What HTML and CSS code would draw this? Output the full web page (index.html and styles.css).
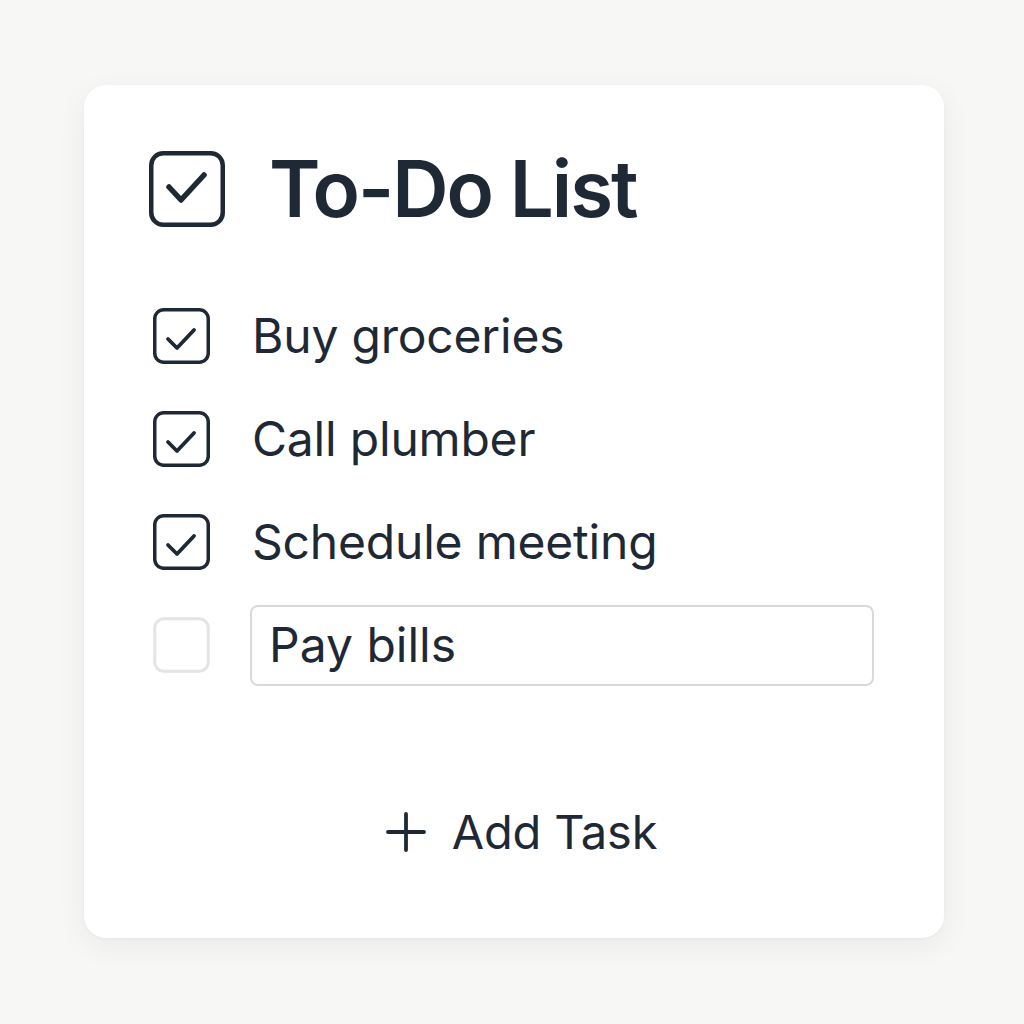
FILE: index.html
```html
<!DOCTYPE html>
<html>
<head>
<meta charset="utf-8">
<link rel="stylesheet" href="styles.css">
</head>
<body>
<div class="card">
  <div class="header">
    <svg class="header-icon" viewBox="0 0 76 76" width="76" height="76">
      <rect x="2.25" y="2.25" width="71.5" height="71.5" rx="12" fill="none" stroke="#1f2935" stroke-width="4.5"/>
      <path d="M20 36 L32 49 L55 24" fill="none" stroke="#1f2935" stroke-width="5.5" stroke-linecap="round" stroke-linejoin="round"/>
    </svg>
    <h1 class="title">To-Do List</h1>
  </div>
  <ul class="tasks">
    <li class="task">
      <svg class="box" viewBox="0 0 57 56" width="57" height="56">
        <rect x="1.75" y="1.75" width="53.5" height="52.5" rx="9" fill="none" stroke="#1f2935" stroke-width="3.5"/>
        <path d="M15 31 L24 40 L41 22" fill="none" stroke="#1f2935" stroke-width="3.8" stroke-linecap="round" stroke-linejoin="round"/>
      </svg>
      <span class="label">Buy groceries</span>
    </li>
    <li class="task">
      <svg class="box" viewBox="0 0 57 56" width="57" height="56">
        <rect x="1.75" y="1.75" width="53.5" height="52.5" rx="9" fill="none" stroke="#1f2935" stroke-width="3.5"/>
        <path d="M15 31 L24 40 L41 22" fill="none" stroke="#1f2935" stroke-width="3.8" stroke-linecap="round" stroke-linejoin="round"/>
      </svg>
      <span class="label">Call plumber</span>
    </li>
    <li class="task">
      <svg class="box" viewBox="0 0 57 56" width="57" height="56">
        <rect x="1.75" y="1.75" width="53.5" height="52.5" rx="9" fill="none" stroke="#1f2935" stroke-width="3.5"/>
        <path d="M15 31 L24 40 L41 22" fill="none" stroke="#1f2935" stroke-width="3.8" stroke-linecap="round" stroke-linejoin="round"/>
      </svg>
      <span class="label">Schedule meeting</span>
    </li>
    <li class="task">
      <svg class="box" viewBox="0 0 57 56" width="57" height="56">
        <rect x="1.75" y="1.75" width="53.5" height="52.5" rx="9" fill="none" stroke="#e4e4e4" stroke-width="3"/>
      </svg>
      <div class="input">Pay bills</div>
    </li>
  </ul>
  <div class="add">
    <svg class="plus" viewBox="0 0 40 40" width="40" height="40">
      <path d="M20 2 V38 M2 20 H38" fill="none" stroke="#1f2935" stroke-width="3.8" stroke-linecap="round"/>
    </svg>
    <span class="add-label">Add Task</span>
  </div>
</div>
</body>
</html>
```
FILE: styles.css
```css
* { box-sizing: border-box; }
html, body { margin: 0; padding: 0; }
body {
  width: 1024px;
  height: 1024px;
  background: #f7f7f6;
  font-family: Inter, "Noto Sans", sans-serif;
  color: #1f2935;
  padding: 85px 80px 0 84px;
}
.card {
  width: 860px;
  height: 853px;
  background: #ffffff;
  border-radius: 22px;
  box-shadow: 0 8px 30px rgba(0,0,0,0.06), 0 1px 3px rgba(0,0,0,0.03);
  padding: 66px 70px 0 65px;
  display: flex;
  flex-direction: column;
}
.header {
  display: flex;
  align-items: center;
  gap: 44px;
  height: 76px;
}
.header-icon { flex: none; }
.title {
  margin: 0;
  font-size: 78px;
  font-weight: 600;
  letter-spacing: -2px;
  line-height: 1;
}
.tasks {
  list-style: none;
  margin: 81px 0 0 0;
  padding: 0;
  display: flex;
  flex-direction: column;
  gap: 47px;
}
.task {
  display: flex;
  align-items: center;
  gap: 42px;
  height: 56px;
  padding-left: 4px;
}
.box { flex: none; }
.label {
  font-size: 48px;
  font-weight: 400;
  line-height: 1;
  letter-spacing: -0.2px;
}
.input {
  margin-left: -2px;
  width: 624px;
  height: 81px;
  border: 2px solid #d9d9d9;
  border-radius: 8px;
  font-size: 48px;
  line-height: 1;
  padding-left: 17px;
  display: flex;
  align-items: center;
}
.add {
  margin-top: 135px;
  display: flex;
  align-items: center;
  justify-content: center;
  gap: 26px;
  padding-left: 20px;
}
.plus { flex: none; }
.add-label {
  font-size: 47px;
  line-height: 1;
  letter-spacing: -0.2px;
}
```
